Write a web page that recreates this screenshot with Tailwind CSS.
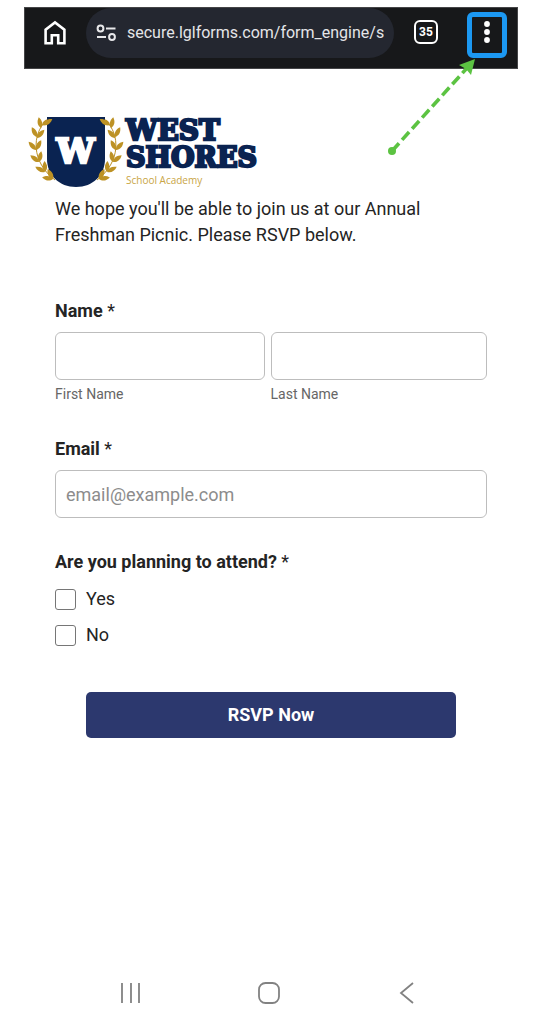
<!DOCTYPE html>
<html lang="en">
<head>
<meta charset="utf-8">
<meta name="viewport" content="width=device-width, initial-scale=1">
<title>West Shores School Academy – RSVP</title>
<script src="https://cdn.jsdelivr.net/npm/@tailwindcss/browser@4"></script>
</head>
<body class="bg-white text-[#242424] font-[Roboto,sans-serif]">
<div class="flex min-h-screen flex-col px-6 pt-[7px]">
  <header class="flex items-start border border-[#454547] bg-[#17181a] pb-[10px] pr-[10px]">
    <button type="button" aria-label="Home" class="mt-3 ml-[17px] shrink-0">
      <svg class="size-[26px]" viewBox="0 0 26 26" fill="none" stroke="#fff" stroke-width="2.6"><path d="M3.600 23.200V9.600L13 2.400l9.400 7.200v13.600h-6.200v-8H9.800v8z"/></svg>
    </button>
    <div class="ml-[18px] flex h-[50px] min-w-0 flex-1 items-center rounded-full bg-[#242730] pr-[6px] pl-[10px]">
      <svg class="h-5 w-[21px] shrink-0" viewBox="0 0 21 20" fill="none" stroke="#e8e8ea" stroke-width="2"><circle cx="4.500" cy="5.500" r="2.900"/><path d="M10 5.500h9.500M1 14h9"/><circle cx="16" cy="14" r="2.900"/></svg>
      <span class="ml-[10px] min-w-0 overflow-hidden text-base whitespace-nowrap text-[#e4e5e8]">secure.lglforms.com/form_engine/s</span>
    </div>
    <button type="button" aria-label="Open tabs" class="mt-3 ml-5 flex size-6 shrink-0 items-center justify-center rounded-md border-2 border-white text-xs font-bold text-white">35</button>
    <div class="relative mt-1 ml-[29px] shrink-0">
      <button type="button" aria-label="More options" class="flex h-[46px] w-10 items-start justify-center rounded-md border-[5px] border-[#1c98f2] pt-[3px]">
        <svg class="h-6 w-2" viewBox="0 0 8 24" fill="#fff"><circle cx="4" cy="4" r="2.900"/><circle cx="4" cy="12" r="2.900"/><circle cx="4" cy="20" r="2.900"/></svg>
      </button>
      <svg class="absolute top-[46px] right-[30px] h-[98px] w-[90px]" viewBox="0 0 90 98" aria-hidden="true"><path d="M5 93 80 10" stroke="#5cc342" stroke-width="3.600" stroke-dasharray="10.500 4.500" fill="none"/><circle cx="5" cy="93" r="4" fill="#5cc342"/><path d="M88 1 72 7l7 4 5 6z" fill="#5cc342"/></svg>
    </div>
  </header>

  <main class="pt-[45px]">
    <svg class="ml-1 h-[76px] w-[236px]" viewBox="28 114 236 76" role="img" aria-label="West Shores School Academy">
      <defs>
        <path id="leaf" d="M0 0C-3-3-3-7 0-11 3-7 3-3 0 0z"/>
        <g id="laurel" fill="#bd9225">
          <path d="M46 121C32 134 31 162 55 180" fill="none" stroke="#bd9225"/>
          <use href="#leaf" transform="translate(41 128) rotate(-12)"/>
          <use href="#leaf" transform="translate(42 125) rotate(58)"/>
          <use href="#leaf" transform="translate(37 137) rotate(-28)"/>
          <use href="#leaf" transform="translate(37 138) rotate(42)"/>
          <use href="#leaf" transform="translate(36 150) rotate(-42)"/>
          <use href="#leaf" transform="translate(36 150) rotate(28)"/>
          <use href="#leaf" transform="translate(39 162) rotate(-52)"/>
          <use href="#leaf" transform="translate(39 162) rotate(12)"/>
          <use href="#leaf" transform="translate(45 172) rotate(-62)"/>
          <use href="#leaf" transform="translate(45 172) rotate(-2)"/>
          <use href="#leaf" transform="translate(53 179) rotate(-82)"/>
          <use href="#leaf" transform="translate(53 179) rotate(-28)"/>
        </g>
      </defs>
      <use href="#laurel"/>
      <use href="#laurel" transform="translate(152 0) scale(-1 1)"/>
      <path d="M47 117h58v42c0 16-12 28-29 28s-29-12-29-28z" fill="#0a2351"/>
      <g fill="#bd9225"><use href="#leaf" transform="translate(43 125) rotate(58)"/><use href="#leaf" transform="translate(109 125) rotate(-58)"/><use href="#leaf" transform="translate(53 179) rotate(-28)"/><use href="#leaf" transform="translate(99 179) rotate(28)"/></g>
      <text x="75.500" y="163" text-anchor="middle" font-family="DejaVu Serif" font-weight="700" font-size="34" fill="#fff" stroke="#fff" stroke-width="2.600">W</text>
      <g font-family="DejaVu Serif" font-weight="700" fill="#0a2351" stroke="#0a2351" stroke-width="2.400">
        <text x="126" y="140" font-size="28">WEST</text>
        <text x="126" y="167" font-size="27">SHORES</text>
      </g>
      <text x="126" y="184" font-family="Open Sans" font-size="10" fill="#c9a545">School Academy</text>
    </svg>

    <form class="px-[31px]">
      <p class="mt-[6px] text-lg leading-[26px]">We hope you'll be able to join us at our Annual Freshman Picnic. Please RSVP below.</p>

      <fieldset class="mt-[50px]">
        <legend class="text-lg leading-[26px] font-bold">Name <span class="font-normal">*</span></legend>
        <div class="mt-2 grid grid-cols-[210fr_217fr] gap-[6px]">
          <div>
            <input id="first" type="text" class="block h-12 w-full rounded-md border border-[#bdbdbd] px-[10px] text-lg">
            <label for="first" class="mt-1 block text-sm text-[#666]">First Name</label>
          </div>
          <div>
            <input id="last" type="text" class="block h-12 w-full rounded-md border border-[#bdbdbd] px-[10px] text-lg">
            <label for="last" class="mt-1 block text-sm text-[#666]">Last Name</label>
          </div>
        </div>
      </fieldset>

      <label for="email" class="mt-8 block text-lg leading-[26px] font-bold">Email <span class="font-normal">*</span></label>
      <input id="email" type="email" placeholder="email@example.com" class="mt-2 block h-12 w-full rounded-md border border-[#bdbdbd] px-[10px] text-lg placeholder:text-[#8c8c8c]">

      <fieldset class="mt-[31px]">
        <legend class="text-lg leading-[26px] font-bold">Are you planning to attend? <span class="font-normal">*</span></legend>
        <div class="mt-[11px] flex flex-col gap-[10px]">
          <label class="flex items-center gap-[10px] text-lg leading-[26px]"><input type="checkbox" class="size-[21px] appearance-none rounded-[3px] border border-[#767676] checked:bg-[#2c386e]">Yes</label>
          <label class="flex items-center gap-[10px] text-lg leading-[26px]"><input type="checkbox" class="size-[21px] appearance-none rounded-[3px] border border-[#767676] checked:bg-[#2c386e]">No</label>
        </div>
      </fieldset>

      <div class="mt-11 px-[31px]">
        <button type="submit" class="h-[46px] w-full rounded-[5px] bg-[#2c386e] text-lg font-bold text-white">RSVP Now</button>
      </div>
    </form>
  </main>

  <nav class="mt-auto flex justify-between pr-[100px] pb-5 pl-24" aria-label="System navigation">
    <button type="button" aria-label="Recent apps"><svg class="size-[22px]" viewBox="0 0 22 22" fill="none" stroke="#828282" stroke-width="1.800"><path d="M2 1v20M11 1v20M19 1v20"/></svg></button>
    <button type="button" aria-label="Home screen"><svg class="size-[22px]" viewBox="0 0 22 22" fill="none" stroke="#828282" stroke-width="1.800"><rect x="1" y="1" width="20" height="20" rx="6.500"/></svg></button>
    <button type="button" aria-label="Back"><svg class="size-[22px]" viewBox="0 0 22 22" fill="none" stroke="#828282" stroke-width="1.800"><path d="M17 1 5 11l12 10"/></svg></button>
  </nav>
</div>
</body>
</html>
